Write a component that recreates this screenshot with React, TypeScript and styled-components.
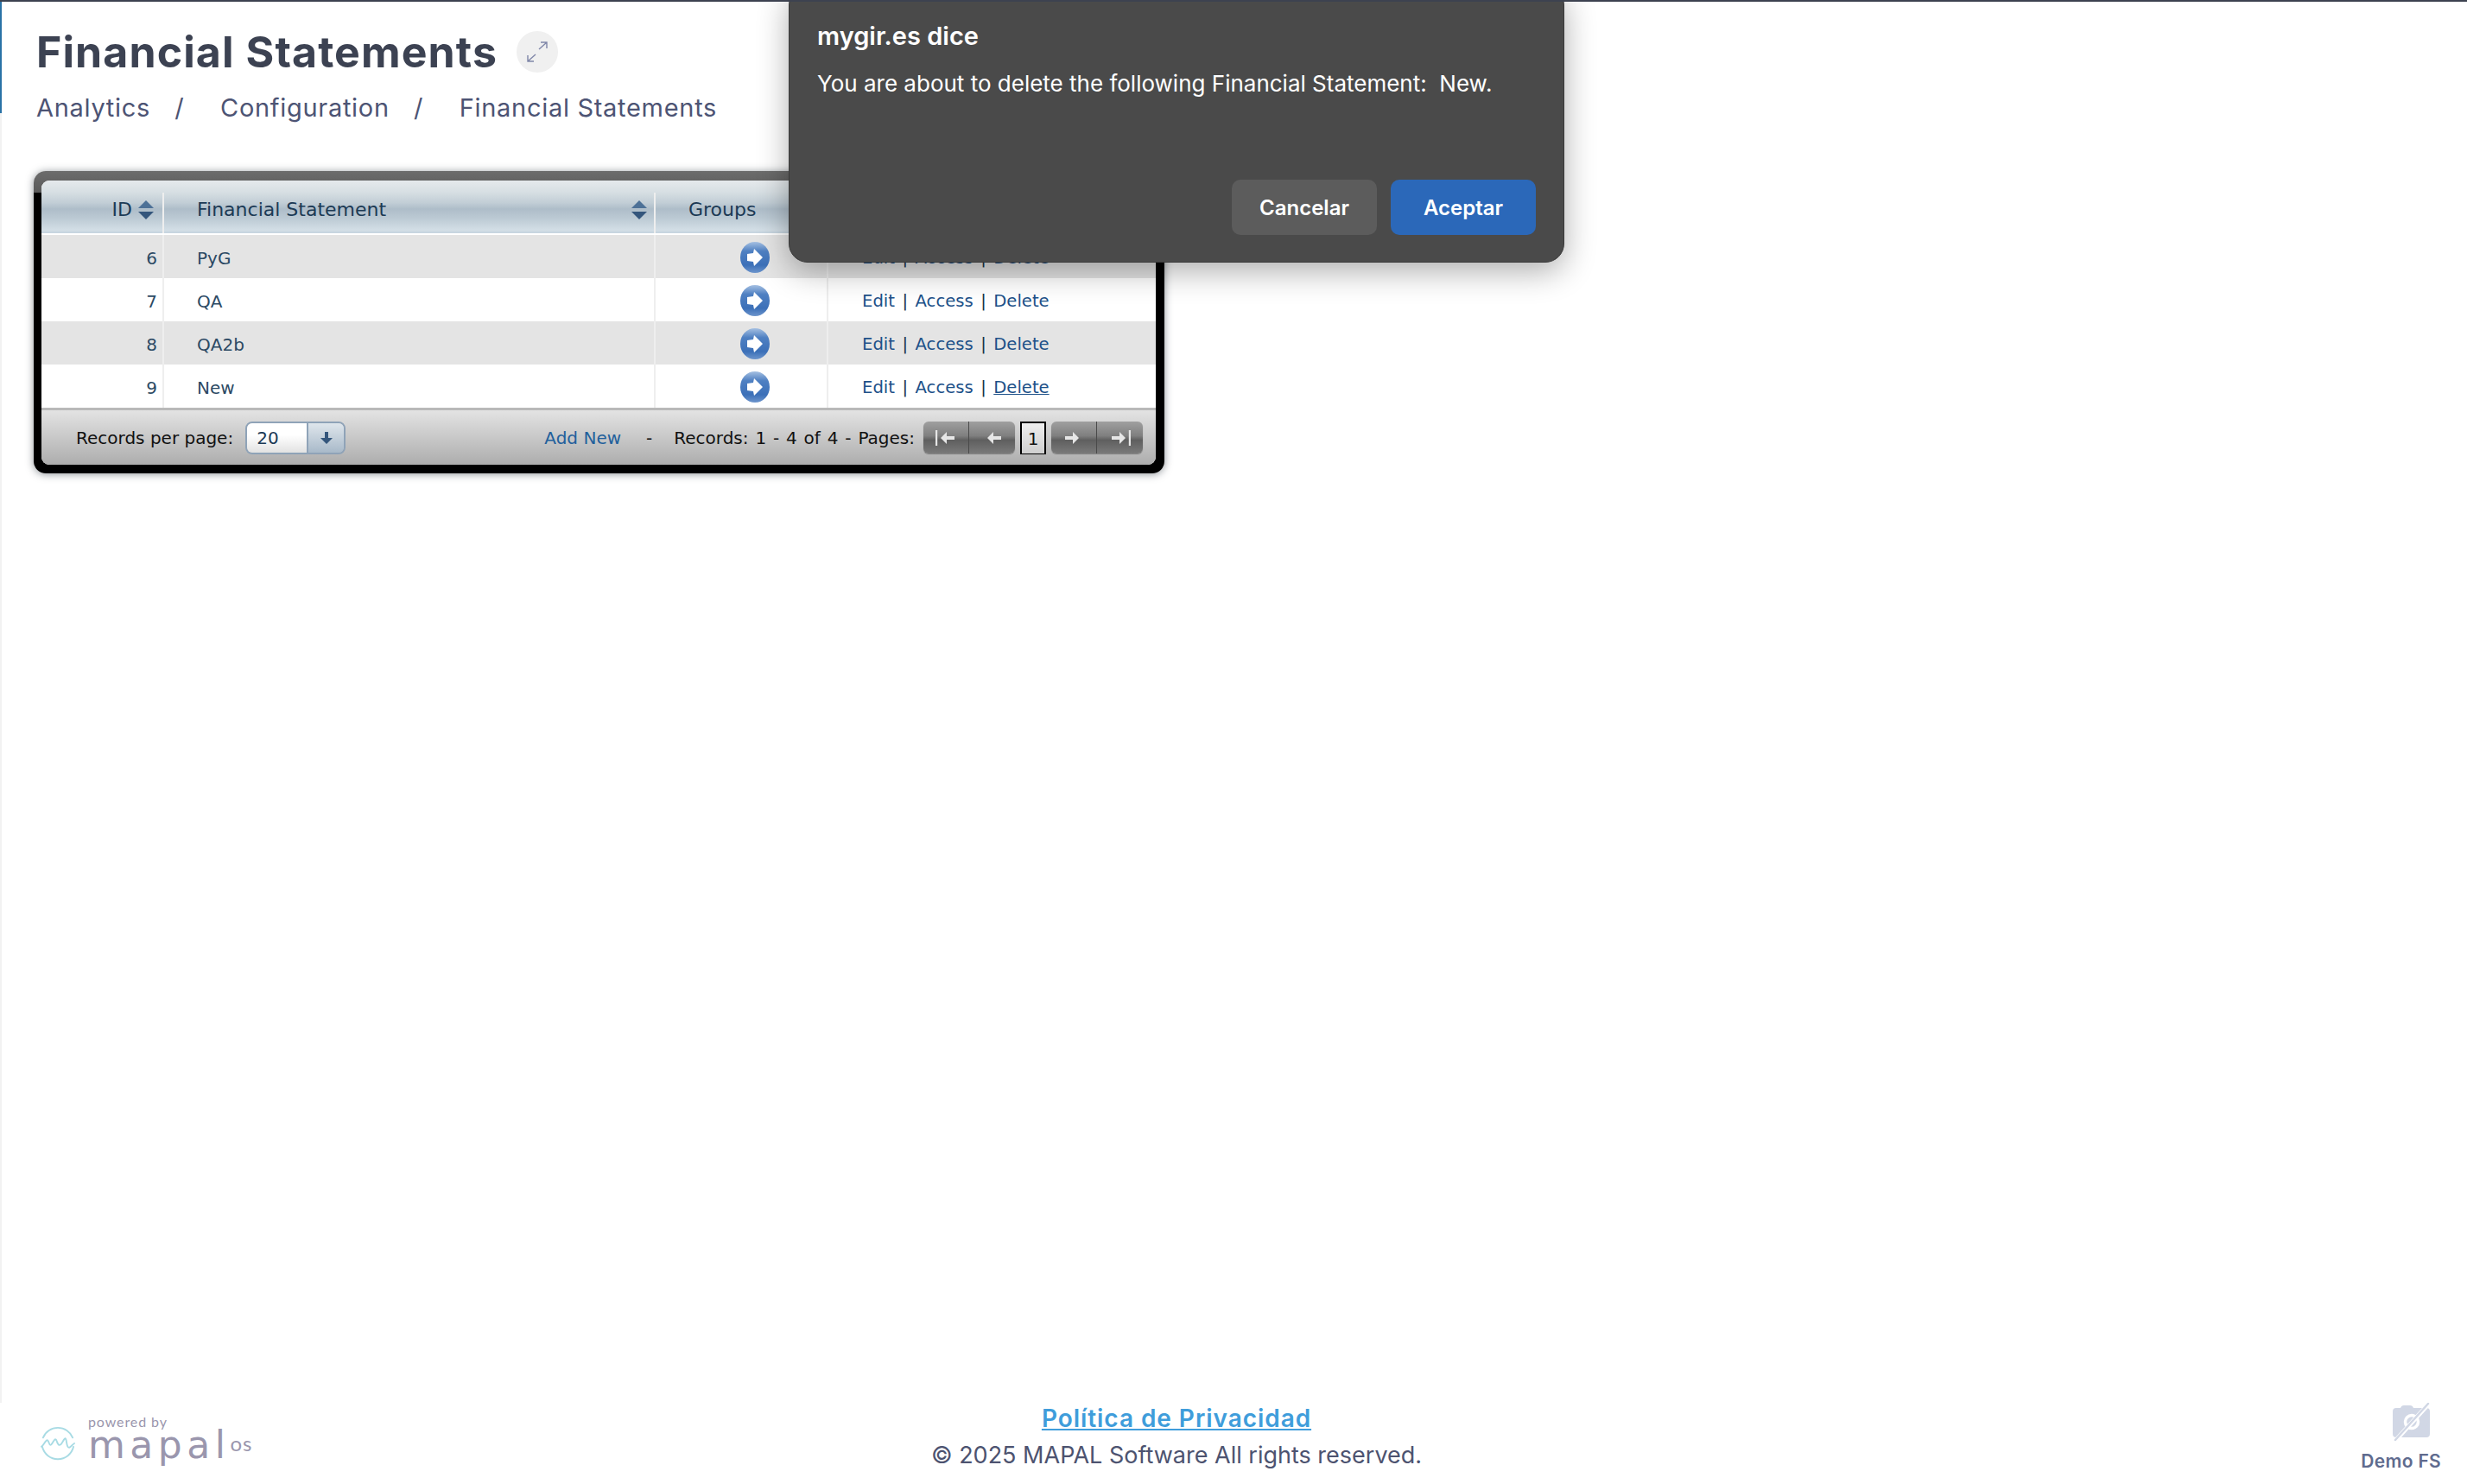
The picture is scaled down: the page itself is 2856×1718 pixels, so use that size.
import * as React from 'react';
import styled, { createGlobalStyle } from 'styled-components';

const GlobalStyle = createGlobalStyle`
  html, body {
    margin: 0;
    padding: 0;
    background: #fff;
    overflow: hidden;
  }
  * {
    box-sizing: border-box;
  }
`;

const Page = styled.div`
  position: relative;
  width: 2856px;
  height: 1718px;
  border-top: 2px solid #3d4250;
  display: flex;
  flex-direction: column;
  font-family: "Inter", "Liberation Sans", sans-serif;
  overflow: hidden;
`;

const Header = styled.header`
  height: 129px;
  border-left: 2px solid #2a72a6;
  padding: 28px 0 0 40px;
`;

const TitleRow = styled.div`
  display: flex;
  align-items: center;
  gap: 22px;
  height: 60px;
`;

const Title = styled.h1`
  margin: 0;
  font-size: 50px;
  line-height: 60px;
  font-weight: 700;
  letter-spacing: 1.1px;
  color: #3c4252;
`;

const ExpandButton = styled.button`
  width: 48px;
  height: 48px;
  border: 0;
  border-radius: 50%;
  background: #f0f0f0;
  padding: 0;
  display: grid;
  place-items: center;
`;

const Breadcrumb = styled.nav`
  display: flex;
  align-items: center;
  margin-top: 17px;
  font-size: 29px;
  line-height: 36px;
  font-weight: 400;
  color: #4d5474;
`;

const Crumb = styled.span`
  letter-spacing: 0.7px;
`;

const CrumbSlash = styled.span`
  width: 81px;
  padding-right: 14px;
  text-align: center;
`;

const Main = styled.main`
  flex: 1;
  border-left: 2px solid #f2f2f2;
  padding: 67px 0 0 37px;
`;

const Frame = styled.section`
  width: 1309px;
  height: 350px;
  padding: 11px 10px 10px 9px;
  border-radius: 14px;
  background: linear-gradient(#6c6c6c 0, #5a5a5a 25px, #000 25px);
  box-shadow: 0 1px 10px rgba(30, 40, 50, 0.5);
`;

const Inner = styled.div`
  height: 100%;
  border-radius: 9px;
  overflow: hidden;
  background: #fff;
  display: flex;
  flex-direction: column;
  font-family: "DejaVu Sans", Verdana, sans-serif;
`;

const columns = '142px 569px 200px 1fr';

const HeadRow = styled.div`
  display: grid;
  grid-template-columns: ${columns};
  height: 63px;
  padding-top: 14px;
  border-bottom: 2px solid #fff;
  background: linear-gradient(#e5e9ec 0, #d7dfe3 22%, #c2ced6 42%, #aebdc9 54%, #bccad4 72%, #d3dee6 94%, #c4d3de 100%);
`;

const HeadCell = styled.div<{ $end?: boolean }>`
  display: flex;
  align-items: center;
  justify-content: ${p => (p.$end ? 'flex-end' : 'space-between')};
  gap: 7px;
  padding: 0 ${p => (p.$end ? '10px' : '8px')} 8px ${p => (p.$end ? '0' : '38px')};
  border-right: 2px solid #eee;
  font-size: 22px;
  color: #1c3a55;
  &:last-child {
    border-right: 0;
  }
`;

const GroupsLabel = styled.span`
  margin-right: auto;
`;

const Row = styled.div<{ $striped: boolean }>`
  display: grid;
  grid-template-columns: ${columns};
  height: 50px;
  background: ${p => (p.$striped ? '#e4e4e4' : '#fff')};
`;

const Cell = styled.div<{ $end?: boolean; $icon?: boolean }>`
  display: flex;
  align-items: center;
  justify-content: ${p => (p.$end ? 'flex-end' : p.$icon ? 'center' : 'flex-start')};
  padding: ${p => (p.$end ? '3px 6px 0 0' : p.$icon ? '2px 0 0 32px' : '3px 0 0 38px')};
  border-right: 2px solid #eee;
  font-size: 20px;
  color: #2c4a64;
  &:last-child {
    border-right: 0;
  }
`;

const Actions = styled(Cell)`
  gap: 8.5px;
  padding-left: 39px;
  font-size: 19.6px;
  color: #17314a;
`;

const ActionLink = styled.a<{ $hover?: boolean }>`
  color: #1d5189;
  text-decoration: ${p => (p.$hover ? 'underline' : 'none')};
`;

const Foot = styled.div`
  flex: 1;
  display: flex;
  align-items: center;
  padding: 0 15px 0 40px;
  border-top: 3px solid #b9b9b9;
  background: linear-gradient(#e3e3e3, #adadad);
  font-size: 20px;
  color: #111;
`;

const PageSize = styled.div`
  display: flex;
  width: 116px;
  height: 38px;
  margin-left: 14px;
  border: 2px solid #8fa3b8;
  border-radius: 8px;
  overflow: hidden;
`;

const PageSizeValue = styled.div`
  width: 71px;
  padding-left: 11px;
  line-height: 34px;
  background: linear-gradient(#fff 40%, #e2e2e2);
  border-right: 2px solid #8fa3b8;
  color: #1c3a55;
`;

const PageSizeArrow = styled.div`
  flex: 1;
  display: grid;
  place-items: center;
  background: linear-gradient(#dfe6ec, #a8b9c9);
`;

const AddNew = styled.a`
  margin-left: auto;
  color: #22609c;
`;

const Dash = styled.span`
  margin: 0 25px 0 29px;
`;

const RecordsInfo = styled.span`
  word-spacing: 1.5px;
`;

const PagerGroup = styled.div`
  display: grid;
  grid-template-columns: 1fr 1fr;
  width: 106px;
  height: 37px;
  margin-left: 10px;
  border-radius: 6px;
  overflow: hidden;
  background: linear-gradient(#a0a0a0 0, #7f7f7f 45%, #5f5f5f 58%, #7a7a7a 100%);
  box-shadow: 0 1px 1px rgba(0, 0, 0, 0.3);
`;

const PagerButton = styled.button`
  border: 0;
  padding: 0;
  background: none;
  display: grid;
  place-items: center;
  &:first-child {
    border-right: 1px solid #4a4a4a;
  }
`;

const PagerSvg = styled.svg`
  filter: blur(0.5px);
`;

const CurrentPage = styled.div`
  width: 30px;
  height: 38px;
  margin: 0 -4px 0 6px;
  border: 2px solid #000;
  border-bottom-width: 1px;
  background: linear-gradient(#eee, #cfcfcf);
  text-align: center;
  line-height: 36px;
  font-size: 20px;
  color: #111;
`;

const PageFooter = styled.footer`
  height: 82px;
  margin-bottom: 12px;
  display: grid;
  grid-template-columns: 1010px 600px 1fr;
  padding: 0 30px 0 47px;
`;

const Powered = styled.div`
  display: flex;
  align-items: flex-start;
  gap: 15px;
  color: #9a96ad;
`;

const MarkSlot = styled.div`
  margin-top: 27px;
`;

const PoweredText = styled.div`
  display: flex;
  flex-direction: column;
  margin-top: 14px;
`;

const PoweredBy = styled.span`
  font-family: "Lato", sans-serif;
  font-size: 16px;
  line-height: 16px;
  letter-spacing: 0.9px;
`;

const Wordmark = styled.div`
  display: flex;
  align-items: flex-start;
`;

const WordmarkName = styled.span`
  font-family: "DejaVu Sans", sans-serif;
  font-size: 44px;
  line-height: 38px;
  letter-spacing: 5.5px;
`;

const WordmarkSuffix = styled.span`
  font-family: "Lato", sans-serif;
  font-size: 24px;
  line-height: 30px;
  margin: 2px 0 0 0;
  letter-spacing: 1px;
`;

const Legal = styled.div`
  text-align: center;
  padding-left: 10px;
`;

const PrivacyLink = styled.a`
  display: block;
  font-size: 28px;
  line-height: 36px;
  font-weight: 600;
  letter-spacing: 0.95px;
  color: #3f9ddb;
  text-decoration: underline;
`;

const Copyright = styled.div`
  margin-top: 7px;
  font-size: 27px;
  line-height: 36px;
  color: #4d5370;
  white-space: nowrap;
`;

const DemoBadge = styled.div`
  display: flex;
  flex-direction: column;
  align-items: flex-end;
  justify-content: flex-end;
  gap: 11px;
  padding-bottom: 7px;
  font-size: 21px;
  line-height: 26px;
  font-weight: 600;
  letter-spacing: 0.3px;
  color: #5f6b8e;
`;

const DemoIcon = styled.svg`
  margin-right: 12px;
`;

const Dialog = styled.div`
  position: absolute;
  top: -18px;
  left: 913px;
  width: 898px;
  height: 320px;
  padding: 40px 32px 31px 32px;
  display: flex;
  flex-direction: column;
  border-radius: 22px;
  background: #4a4a4a;
  border: 1px solid #3a3a3a;
  box-shadow: 0 10px 36px rgba(0, 0, 0, 0.32);
  color: #fff;
`;

const DialogTitle = styled.div`
  font-size: 29px;
  line-height: 34px;
  font-weight: 600;
`;

const DialogText = styled.div`
  margin-top: 21px;
  font-size: 26px;
  line-height: 34px;
  white-space: pre;
`;

const DialogActions = styled.div`
  margin-top: auto;
  display: flex;
  justify-content: flex-end;
  gap: 16px;
`;

const DialogButton = styled.button<{ $primary?: boolean }>`
  width: 168px;
  height: 64px;
  border: 0;
  border-radius: 10px;
  background: ${p => (p.$primary ? '#2b68b9' : '#5c5c5c')};
  color: #fff;
  font-family: inherit;
  font-size: 24px;
  font-weight: 600;
`;

const GoSvg = styled.svg`
  filter: blur(0.6px);
`;

const SortIcon: React.FC = () => (
    <svg width="18" height="22" viewBox="0 0 18 22">
        <path d="M9 0 L18 9 L0 9 Z" fill="#4d7197"/>
        <path d="M0 13 L18 13 L9 22 Z" fill="#34567c"/>
    </svg>
);

const GoIcon: React.FC<{ id: string }> = ({ id }) => (
    <GoSvg width="34" height="36" viewBox="0 0 34 36">
        <defs>
            <linearGradient id={id} x1="0" y1="0" x2="0" y2="1">
                <stop offset="0" stopColor="#a5c0e2"/>
                <stop offset="0.3" stopColor="#4f80c2"/>
                <stop offset="0.75" stopColor="#3c70b8"/>
                <stop offset="1" stopColor="#6d95cc"/>
            </linearGradient>
        </defs>
        <ellipse cx="17" cy="18" rx="17" ry="18" fill={`url(#${id})`}/>
        <path d="M16 8 L26 18 L16 28 L15 23 L8 22 L8 14 L15 13 Z" fill="#fff"/>
    </GoSvg>
);

const PagerIcon: React.FC<{ flip?: boolean; bar?: boolean }> = ({ flip, bar }) => (
    <PagerSvg width="26" height="20" viewBox="0 0 26 20">
        <g transform={flip ? 'translate(26 0) scale(-1 1)' : undefined} fill="#e6e6e6">
            <path d="M7 10 L14 3 L14 8 L23 8 L23 12 L14 12 L14 17 Z"/>
            {bar && <rect x="1" y="1" width="2.2" height="18"/>}
        </g>
    </PagerSvg>
);

const ExpandIcon: React.FC = () => (
    <svg width="26" height="24" viewBox="0 0 26 24" fill="none" stroke="#7f86a8" strokeWidth="1.4">
        <path d="M15 9 L24 1 M17 1 L24 1 L24 8"/>
        <path d="M11 15 L2 23 M9 23 L2 23 L2 16"/>
    </svg>
);

const MapalMark: React.FC = () => (
    <svg width="40" height="40" viewBox="0 0 42 42" fill="none" stroke="#a8dbe4" strokeWidth="2" strokeLinecap="round">
        <path d="M3 14 A19.5 19.5 0 0 1 39 14"/>
        <path d="M40 25 A19.5 19.5 0 0 1 2 25"/>
        <path d="M1 25 C4 23 6 17 8 17 C10 17 10 23 12 23 C14 23 16 16 18 16 C20 16 20 23 23 23 C26 23 28 15 30 15 C32 15 31 27 35 26 C37 25 39 22 41 21"/>
    </svg>
);

const CameraOff: React.FC = () => (
    <DemoIcon width="44" height="44" viewBox="0 0 44 44">
        <path d="M4 6 H9 Q10 3 13 3 H20 Q23 3 24 6 H39 Q43 6 43 10 V36 Q43 40 39 40 H4 Q0 40 0 36 V10 Q0 6 4 6 Z" fill="#d1d7e5"/>
        <circle cx="22" cy="22" r="7.5" fill="none" stroke="#fff" strokeWidth="3.5"/>
        <path d="M3 44 L41 2" stroke="#fff" strokeWidth="5"/>
        <path d="M3 43 L41 1" stroke="#d1d7e5" strokeWidth="2.5" strokeLinecap="round"/>
    </DemoIcon>
);

const statements = [
    { id: 6, name: 'PyG' },
    { id: 7, name: 'QA' },
    { id: 8, name: 'QA2b' },
    { id: 9, name: 'New' },
];

export default function App() {
    return (
        <Page>
            <GlobalStyle/>
            <Header>
                <TitleRow>
                    <Title>Financial Statements</Title>
                    <ExpandButton><ExpandIcon/></ExpandButton>
                </TitleRow>
                <Breadcrumb>
                    <Crumb>Analytics</Crumb>
                    <CrumbSlash>/</CrumbSlash>
                    <Crumb>Configuration</Crumb>
                    <CrumbSlash>/</CrumbSlash>
                    <Crumb>Financial Statements</Crumb>
                </Breadcrumb>
            </Header>
            <Main>
                <Frame>
                    <Inner>
                        <HeadRow>
                            <HeadCell $end>ID <SortIcon/></HeadCell>
                            <HeadCell>Financial Statement <SortIcon/></HeadCell>
                            <HeadCell><GroupsLabel>Groups</GroupsLabel></HeadCell>
                            <HeadCell/>
                        </HeadRow>
                        {statements.map((s, i) => (
                            <Row key={s.id} $striped={i % 2 === 0}>
                                <Cell $end>{s.id}</Cell>
                                <Cell>{s.name}</Cell>
                                <Cell $icon><GoIcon id={`go-${s.id}`}/></Cell>
                                <Actions>
                                    <ActionLink>Edit</ActionLink>|
                                    <ActionLink>Access</ActionLink>|
                                    <ActionLink $hover={s.id === 9}>Delete</ActionLink>
                                </Actions>
                            </Row>
                        ))}
                        <Foot>
                            <span>Records per page:</span>
                            <PageSize>
                                <PageSizeValue>20</PageSizeValue>
                                <PageSizeArrow>
                                    <svg width="18" height="18" viewBox="0 0 18 18">
                                        <path d="M7 2 H11 V9 H16 L9 16 L2 9 H7 Z" fill="#34567c"/>
                                    </svg>
                                </PageSizeArrow>
                            </PageSize>
                            <AddNew>Add New</AddNew>
                            <Dash>-</Dash>
                            <RecordsInfo>Records: 1 - 4 of 4 - Pages:</RecordsInfo>
                            <PagerGroup>
                                <PagerButton><PagerIcon bar/></PagerButton>
                                <PagerButton><PagerIcon/></PagerButton>
                            </PagerGroup>
                            <CurrentPage>1</CurrentPage>
                            <PagerGroup>
                                <PagerButton><PagerIcon flip/></PagerButton>
                                <PagerButton><PagerIcon flip bar/></PagerButton>
                            </PagerGroup>
                        </Foot>
                    </Inner>
                </Frame>
            </Main>
            <PageFooter>
                <Powered>
                    <MarkSlot><MapalMark/></MarkSlot>
                    <PoweredText>
                        <PoweredBy>powered by</PoweredBy>
                        <Wordmark>
                            <WordmarkName>mapal</WordmarkName>
                            <WordmarkSuffix>os</WordmarkSuffix>
                        </Wordmark>
                    </PoweredText>
                </Powered>
                <Legal>
                    <PrivacyLink>Política de Privacidad</PrivacyLink>
                    <Copyright>© 2025 MAPAL Software All rights reserved.</Copyright>
                </Legal>
                <DemoBadge>
                    <CameraOff/>
                    <span>Demo FS</span>
                </DemoBadge>
            </PageFooter>
            <Dialog>
                <DialogTitle>mygir.es dice</DialogTitle>
                <DialogText>You are about to delete the following Financial Statement:  New.</DialogText>
                <DialogActions>
                    <DialogButton>Cancelar</DialogButton>
                    <DialogButton $primary>Aceptar</DialogButton>
                </DialogActions>
            </Dialog>
        </Page>
    );
}
